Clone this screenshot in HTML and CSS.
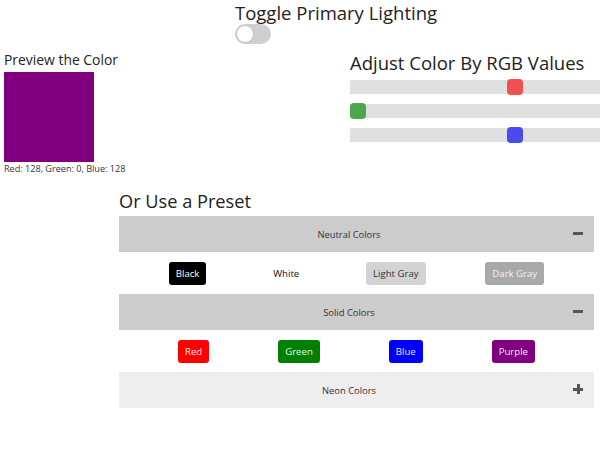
FILE: index.html
```html
<!DOCTYPE html>
<html lang="en">
<head>
<meta charset="utf-8">
<title>Color Picker</title>
<link rel="stylesheet" href="styles.css">
</head>
<body>
<div class="app">
  <header class="top">
    <h1 class="title top-title">Toggle Primary Lighting</h1>
    <div class="toggle"><div class="knob"></div></div>
  </header>

  <section class="middle">
    <div class="preview">
      <h2 class="sub">Preview the Color</h2>
      <div class="swatch"></div>
      <p class="caption">Red: 128, Green: 0, Blue: 128</p>
    </div>
    <div class="adjust">
      <h2 class="title">Adjust Color By RGB Values</h2>
      <div class="sliders">
        <input class="slider red" type="range" min="0" max="255" value="128">
        <input class="slider green" type="range" min="0" max="255" value="0">
        <input class="slider blue" type="range" min="0" max="255" value="128">
      </div>
    </div>
  </section>

  <section class="presets">
    <h2 class="title preset-title">Or Use a Preset</h2>
    <div class="acc">
      <div class="acc-head open">
        <span class="acc-label">Neutral Colors</span>
        <span class="acc-icon"><span class="minus"></span></span>
      </div>
      <div class="acc-body">
        <button class="btn b-black">Black</button>
        <button class="btn b-white">White</button>
        <button class="btn b-lgray">Light Gray</button>
        <button class="btn b-dgray">Dark Gray</button>
      </div>
      <div class="acc-head open">
        <span class="acc-label">Solid Colors</span>
        <span class="acc-icon"><span class="minus"></span></span>
      </div>
      <div class="acc-body">
        <button class="btn b-red">Red</button>
        <button class="btn b-green">Green</button>
        <button class="btn b-blue">Blue</button>
        <button class="btn b-purple">Purple</button>
      </div>
      <div class="acc-head closed">
        <span class="acc-label">Neon Colors</span>
        <span class="acc-icon"><span class="plus"></span></span>
      </div>
    </div>
  </section>
</div>
</body>
</html>
```
FILE: styles.css
```css
* { box-sizing: border-box; }
html, body { margin: 0; padding: 0; }
body {
  font-family: "Open Sans", "Noto Sans", sans-serif;
  color: #222;
  background: #fff;
}
.app { width: 600px; height: 450px; overflow: hidden; }

.title {
  margin: 0;
  font-size: 18.5px;
  line-height: 24px;
  font-weight: 400;
  color: #222;
}
.top-title { line-height: 25.5px; }

.top {
  display: flex;
  flex-direction: column;
  align-items: flex-start;
  padding-left: 235px;
}
.toggle {
  width: 36px;
  height: 20px;
  margin-top: -1.5px;
  border-radius: 10px;
  background: #cfcfcf;
  padding: 2px;
}
.knob {
  width: 16px;
  height: 16px;
  border-radius: 50%;
  background: #fff;
  box-shadow: 0 0 0 1px #c2c2c2;
}

.middle {
  display: flex;
  margin-top: 6px;
}
.preview {
  width: 350px;
  padding-left: 4px;
}
.sub {
  margin: 0;
  font-size: 13.9px;
  line-height: 20px;
  font-weight: 400;
  color: #222;
}
.swatch {
  width: 90px;
  height: 90px;
  margin-top: 2px;
  background: rgb(128, 0, 128);
}
.caption {
  margin: 0;
  font-size: 9.1px;
  line-height: 14px;
  color: #333;
}

.adjust {
  width: 250px;
  overflow: hidden;
  padding-top: 1px;
}
.sliders {
  display: flex;
  flex-direction: column;
  gap: 10px;
  margin-top: 4px;
  padding: 1px 0;
}
.slider {
  -webkit-appearance: none;
  appearance: none;
  display: block;
  width: 329px;
  height: 14px;
  margin: 0;
  background: transparent;
  outline: none;
}
.slider::-webkit-slider-runnable-track {
  height: 14px;
  background: #e0e0e0;
}
.slider::-webkit-slider-thumb {
  -webkit-appearance: none;
  appearance: none;
  width: 16px;
  height: 16px;
  margin-top: -1px;
  border: none;
  border-radius: 4px;
}
.red::-webkit-slider-thumb { background: #f05050; }
.green::-webkit-slider-thumb { background: #4ca64c; }
.blue::-webkit-slider-thumb { background: #4a4af0; }

.presets {
  margin-left: 119px;
  width: 475px;
  margin-top: 13px;
}
.preset-title { margin-bottom: 3px; font-size: 18.2px; }

.acc-head {
  display: flex;
  align-items: center;
  height: 36px;
  padding: 0 11px;
  background: #cccccc;
  font-size: 9.4px;
  color: #333;
}
.acc-head.closed { background: #eeeeee; }
.acc-label { flex: 1; text-align: center; }
.acc-icon {
  width: 15px;
  display: flex;
  justify-content: flex-end;
  align-items: center;
}
.minus {
  display: block;
  width: 10px;
  height: 3px;
  background: #555;
  margin-top: -2px;
}
.plus {
  display: block;
  width: 10px;
  height: 10px;
  margin-top: -2px;
  background:
    linear-gradient(#555, #555) center / 10px 3px no-repeat,
    linear-gradient(#555, #555) center / 3px 10px no-repeat;
}

.acc-body {
  display: flex;
  align-items: center;
  justify-content: space-evenly;
  height: 42px;
  background: #fff;
}
.btn {
  height: 23px;
  margin: 0 10px;
  padding: 0 7px;
  border: none;
  border-radius: 3px;
  font-family: inherit;
  font-size: 9.6px;
  line-height: 23px;
  cursor: pointer;
}
.b-black { background: #000; color: #fff; }
.b-white { background: transparent; color: #111; }
.b-lgray { background: #d3d3d3; color: #333; }
.b-dgray { background: #a9a9a9; color: #f2f2f2; }
.b-red { background: #ff0000; color: #ffe6e6; }
.b-green { background: #008000; color: #e6f5e6; }
.b-blue { background: #0000ff; color: #e8e8ff; }
.b-purple { background: #800080; color: #f5e6f5; }
```
